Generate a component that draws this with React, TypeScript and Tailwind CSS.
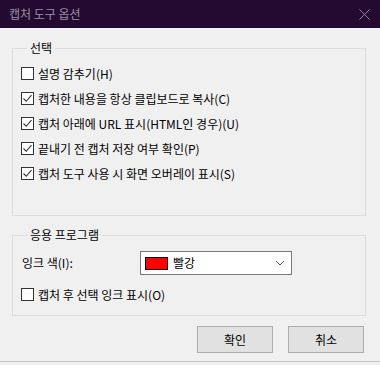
import React from 'react'

const font = { fontFamily: '"Noto Sans CJK KR", "Noto Sans", sans-serif' }

function Check({ checked }: { checked: boolean }) {
  return (
    <span className="flex h-[13px] w-[13px] shrink-0 items-center justify-center border border-[#333333] bg-white">
      {checked && (
        <svg width="11" height="11" viewBox="0 0 11 11" fill="none" aria-hidden>
          <path d="M1.5 5.5 L4.2 8.3 L9.5 2.2" stroke="#333333" strokeWidth="1.1" />
        </svg>
      )}
    </span>
  )
}

function Row({ label, checked }: { label: string; checked: boolean }) {
  return (
    <div className="flex h-[25px] items-center gap-[4px]">
      <Check checked={checked} />
      <span className="text-[12px] leading-[16px] text-black">{label}</span>
    </div>
  )
}

export default function App() {
  const options = [
    { label: '설명 감추기(H)', checked: false },
    { label: '캡처한 내용을 항상 클립보드로 복사(C)', checked: true },
    { label: '캡처 아래에 URL 표시(HTML인 경우)(U)', checked: true },
    { label: '끝내기 전 캡처 저장 여부 확인(P)', checked: true },
    { label: '캡처 도구 사용 시 화면 오버레이 표시(S)', checked: true },
  ]

  return (
    <div className="flex h-[365px] w-[380px] flex-col bg-[#f0f0f0]" style={font}>
      <div className="flex h-[28px] shrink-0 items-center justify-between bg-[#240a30] pl-[9px] pr-[10px]">
        <span className="text-[12px] text-[#9a90a0]">캡처 도구 옵션</span>
        <svg width="11" height="11" viewBox="0 0 11 11" aria-hidden>
          <path d="M0.5 0.5 L10.5 10.5 M10.5 0.5 L0.5 10.5" stroke="#8f8597" strokeWidth="1" />
        </svg>
      </div>

      <fieldset className="mx-[12px] mr-[14px] mt-[12px] border border-[#dcdcdc] px-[8px] pb-[29px] pt-[5px]">
        <legend className="ml-[6px] px-[3px] text-[12px] leading-[16px] text-black">선택</legend>
        {options.map((o) => (
          <Row key={o.label} label={o.label} checked={o.checked} />
        ))}
      </fieldset>

      <fieldset className="mx-[12px] mr-[14px] mt-[11px] border border-[#dcdcdc] px-[8px] pb-[8px] pt-[8px]">
        <legend className="ml-[6px] px-[3px] text-[12px] leading-[16px] text-black">응용 프로그램</legend>
        <div className="flex h-[24px] items-center">
          <span className="w-[119px] pl-[1px] text-[12px] text-black">잉크 색(I):</span>
          <div className="flex h-[24px] w-[152px] items-center border border-[#7a7a7a] bg-white pl-[4px] pr-[6px]">
            <span className="h-[13px] w-[23px] border border-black bg-[#ff0000]" />
            <span className="ml-[5px] flex-1 text-[12px] text-black">빨강</span>
            <svg width="10" height="6" viewBox="0 0 10 6" fill="none" aria-hidden>
              <path d="M1 1 L5 5 L9 1" stroke="#555555" strokeWidth="1" />
            </svg>
          </div>
        </div>
        <div className="mt-[7px]">
          <Row label="캡처 후 선택 잉크 표시(O)" checked={false} />
        </div>
      </fieldset>

      <div className="mr-[16px] mt-[10px] flex justify-end gap-[15px]">
        <button className="h-[27px] w-[76px] border border-[#adadad] bg-[#e1e1e1] text-[12px] text-black">확인</button>
        <button className="h-[27px] w-[76px] border border-[#adadad] bg-[#e1e1e1] text-[12px] text-black">취소</button>
      </div>

      <div className="flex-1" />
      <div className="flex h-[4px] shrink-0 items-start justify-end">
        <div className="h-[1px] w-full bg-[#c4c4c4]" />
      </div>
    </div>
  )
}
